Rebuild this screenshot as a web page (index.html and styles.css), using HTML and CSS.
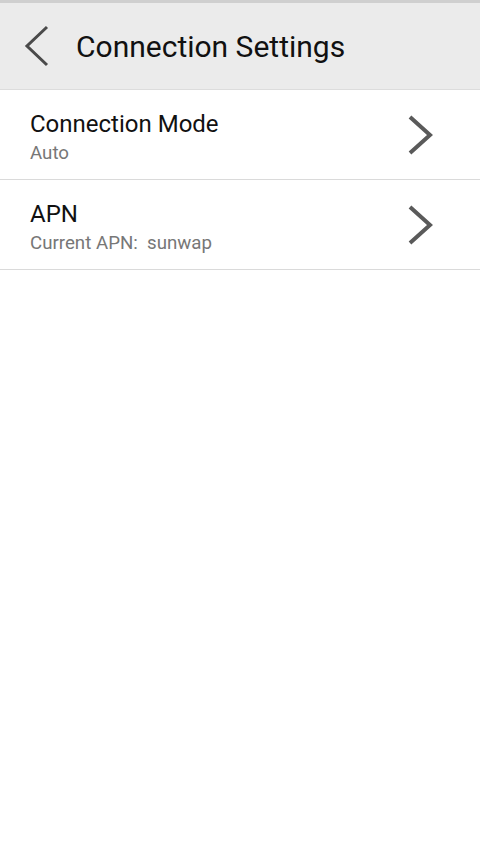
FILE: index.html
```html
<!DOCTYPE html>
<html>
<head>
<meta charset="utf-8">
<link rel="stylesheet" href="styles.css">
</head>
<body>
<div class="topstrip"></div>
<header class="bar">
  <svg class="back" width="30" height="44" viewBox="0 0 30 44"><polyline points="25,3 5,22 25,41" fill="none" stroke="#4a4a4a" stroke-width="3"/></svg>
  <h1 class="title">Connection Settings</h1>
</header>
<ul class="list">
  <li class="row">
    <div class="texts">
      <div class="label">Connection Mode</div>
      <div class="sub">Auto</div>
    </div>
    <svg class="chev" width="30" height="44" viewBox="0 0 30 44"><polyline points="5,4 25,22 5,40" fill="none" stroke="#5a5a5a" stroke-width="4"/></svg>
  </li>
  <li class="row">
    <div class="texts">
      <div class="label">APN</div>
      <div class="sub">Current APN:&nbsp; sunwap</div>
    </div>
    <svg class="chev" width="30" height="44" viewBox="0 0 30 44"><polyline points="5,4 25,22 5,40" fill="none" stroke="#5a5a5a" stroke-width="4"/></svg>
  </li>
</ul>
</body>
</html>
```
FILE: styles.css
```css
html, body {
  margin: 0;
  padding: 0;
  background: #ffffff;
  font-family: Roboto, "Noto Sans", sans-serif;
}
.topstrip {
  height: 3px;
  background: #cfcfcf;
}
.bar {
  height: 87px;
  background: #ebebeb;
  border-bottom: 1px solid #dcdcdc;
  display: flex;
  align-items: center;
  box-sizing: border-box;
}
.back {
  margin-left: 22px;
  margin-top: -1px;
}
.title {
  margin: 0 0 0 24px;
  font-size: 30px;
  font-weight: 400;
  color: #111;
}
.list {
  list-style: none;
  margin: 0;
  padding: 0;
}
.row {
  height: 90px;
  border-bottom: 1px solid #dadada;
  box-sizing: border-box;
  display: flex;
  align-items: center;
  padding-left: 30px;
  padding-right: 45px;
}
.texts {
  flex: 1;
  display: flex;
  flex-direction: column;
  gap: 3px;
  padding-top: 3px;
}
.label {
  font-size: 24px;
  color: #111;
  line-height: 30px;
}
.sub {
  font-size: 18.7px;
  color: #777;
  line-height: 22px;
}
.chev {
  margin-top: 0;
}
```
